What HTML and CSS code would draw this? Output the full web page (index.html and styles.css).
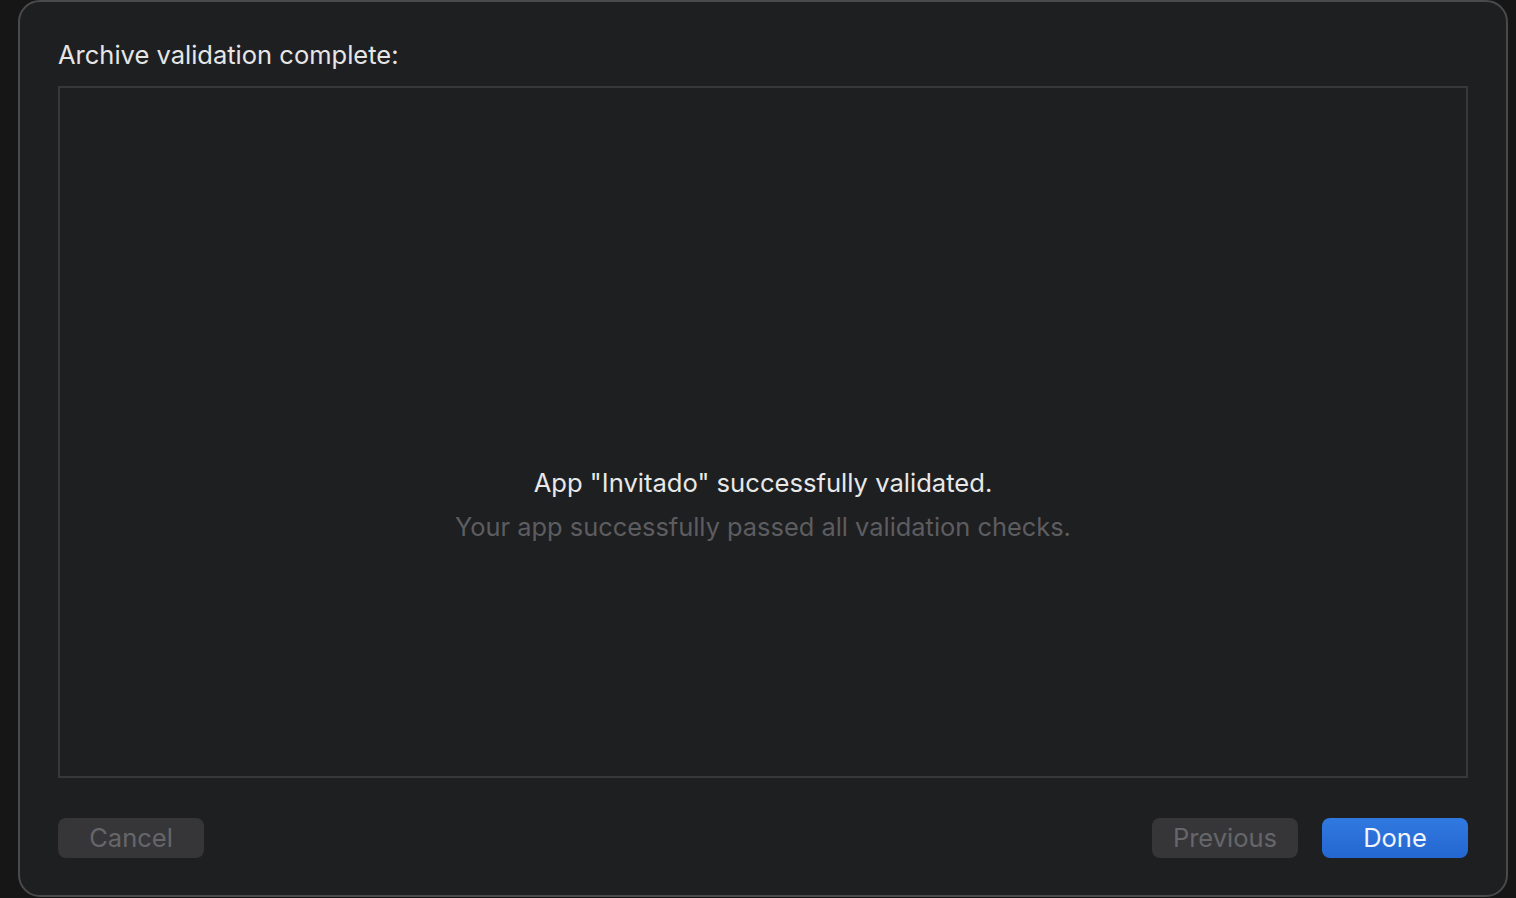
FILE: index.html
```html
<!DOCTYPE html>
<html>
<head>
<meta charset="utf-8">
<link rel="stylesheet" href="styles.css">
</head>
<body>
<div class="screen">
  <div class="dialog">
    <h1 class="title">Archive validation complete:</h1>
    <div class="panel">
      <div class="message">
        <div class="msg-main">App "Invitado" successfully validated.</div>
        <div class="msg-sub">Your app successfully passed all validation checks.</div>
      </div>
    </div>
    <div class="footer">
      <button class="btn btn-disabled">Cancel</button>
      <div class="right">
        <button class="btn btn-disabled">Previous</button>
        <button class="btn btn-primary">Done</button>
      </div>
    </div>
  </div>
</div>
</body>
</html>
```
FILE: styles.css
```css
* { box-sizing: border-box; }
html, body {
  margin: 0;
  padding: 0;
  width: 1516px;
  height: 898px;
  overflow: hidden;
  background: #161617;
  font-family: Inter, "Liberation Sans", sans-serif;
}
.screen {
  width: 1516px;
  height: 898px;
  padding: 0 8px 0 18px;
}
.dialog {
  width: 1490px;
  height: 897px;
  background: #1e1f21;
  border: 2px solid #4a4a4c;
  border-radius: 22px;
  padding: 0 38px 0 38px;
  display: flex;
  flex-direction: column;
}
.title {
  margin: 38px 0 0 0;
  font-size: 25.5px;
  font-weight: 400;
  color: #e6e6e7;
  line-height: 30px;
  height: 30px;
}
.panel {
  margin-top: 16px;
  height: 692px;
  border: 2px solid #38383a;
  display: flex;
  align-items: center;
  justify-content: center;
}
.message {
  text-align: center;
  margin-top: 146px;
}
.msg-main {
  font-size: 25.6px;
  color: #e8e8e9;
  line-height: 30px;
}
.msg-sub {
  margin-top: 14px;
  font-size: 25.4px;
  color: #5d5d60;
  line-height: 30px;
}
.footer {
  margin-top: 40px;
  display: flex;
  justify-content: space-between;
}
.right {
  display: flex;
  gap: 24px;
}
.btn {
  width: 146px;
  height: 40px;
  border: none;
  border-radius: 8px;
  font-family: Inter, "Liberation Sans", sans-serif;
  font-size: 25.5px;
  padding: 0;
  line-height: 40px;
}
.btn-disabled {
  background: #363638;
  color: #66666a;
}
.btn-primary {
  background: linear-gradient(#3079e0, #2467d0);
  color: #f2f5fb;
}
```
